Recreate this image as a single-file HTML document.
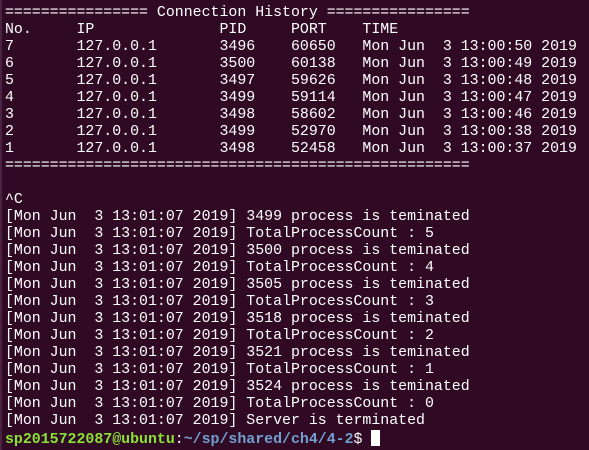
<!DOCTYPE html>
<html><head><style>
html,body{margin:0;padding:0;width:589px;height:450px;overflow:hidden;background:#300a24;}
body{border-left:2px solid #4a2340;box-sizing:border-box;}
pre{margin:0;padding:5px 0 0 3px;font-family:"Liberation Mono",monospace;font-size:14.9px;line-height:17px;color:#ffffff;white-space:pre;}
.g{color:#8ae234;font-weight:bold}
.b{color:#729fcf;font-weight:bold}
.c{background:#fff;display:inline-block;width:9px;height:16px;vertical-align:-3px}
</style></head><body><pre>================ Connection History ================
No.     IP              PID     PORT    TIME
7       127.0.0.1       3496    60650   Mon Jun  3 13:00:50 2019
6       127.0.0.1       3500    60138   Mon Jun  3 13:00:49 2019
5       127.0.0.1       3497    59626   Mon Jun  3 13:00:48 2019
4       127.0.0.1       3499    59114   Mon Jun  3 13:00:47 2019
3       127.0.0.1       3498    58602   Mon Jun  3 13:00:46 2019
2       127.0.0.1       3499    52970   Mon Jun  3 13:00:38 2019
1       127.0.0.1       3498    52458   Mon Jun  3 13:00:37 2019
====================================================

^C
[Mon Jun  3 13:01:07 2019] 3499 process is teminated
[Mon Jun  3 13:01:07 2019] TotalProcessCount : 5
[Mon Jun  3 13:01:07 2019] 3500 process is teminated
[Mon Jun  3 13:01:07 2019] TotalProcessCount : 4
[Mon Jun  3 13:01:07 2019] 3505 process is teminated
[Mon Jun  3 13:01:07 2019] TotalProcessCount : 3
[Mon Jun  3 13:01:07 2019] 3518 process is teminated
[Mon Jun  3 13:01:07 2019] TotalProcessCount : 2
[Mon Jun  3 13:01:07 2019] 3521 process is teminated
[Mon Jun  3 13:01:07 2019] TotalProcessCount : 1
[Mon Jun  3 13:01:07 2019] 3524 process is teminated
[Mon Jun  3 13:01:07 2019] TotalProcessCount : 0
[Mon Jun  3 13:01:07 2019] Server is terminated
<span class="g">sp2015722087@ubuntu</span>:<span class="b">~/sp/shared/ch4/4-2</span>$ <span class="c"></span></pre></body></html>
